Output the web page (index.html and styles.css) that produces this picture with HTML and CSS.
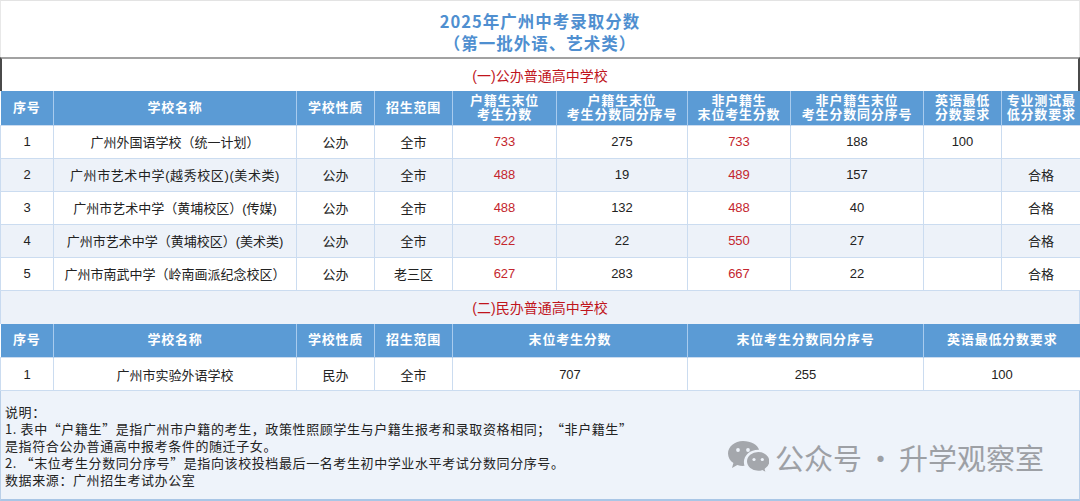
FILE: index.html
```html
<!DOCTYPE html>
<html lang="zh-CN">
<head>
<meta charset="utf-8">
<title>2025年广州中考录取分数</title>
<link rel="stylesheet" href="styles.css">
</head>
<body>
<div class="page">
  <header class="title">
    <div class="tline">2025年广州中考录取分数</div>
    <div class="tline">（第一批外语、艺术类）</div>
  </header>

  <div class="section-head first">(一)公办普通高中学校</div>
  <table class="grid">
    <colgroup>
      <col class="c-no"><col class="c-name"><col class="c-type"><col class="c-range">
      <col class="c-a"><col class="c-b"><col class="c-c"><col class="c-d"><col class="c-e"><col class="c-f">
    </colgroup>
    <thead>
      <tr class="hrow">
        <th>序号</th><th>学校名称</th><th>学校性质</th><th>招生范围</th>
        <th>户籍生末位<br>考生分数</th><th>户籍生末位<br>考生分数同分序号</th>
        <th>非户籍生<br>末位考生分数</th><th>非户籍生末位<br>考生分数同分序号</th>
        <th>英语最低<br>分数要求</th><th>专业测试最<br>低分数要求</th>
      </tr>
    </thead>
    <tbody>
      <tr><td>1</td><td>广州外国语学校（统一计划）</td><td>公办</td><td>全市</td><td class="red">733</td><td>275</td><td class="red">733</td><td>188</td><td>100</td><td></td></tr>
      <tr class="alt"><td>2</td><td class="loose">广州市艺术中学(越秀校区)(美术类)</td><td>公办</td><td>全市</td><td class="red">488</td><td>19</td><td class="red">489</td><td>157</td><td></td><td>合格</td></tr>
      <tr><td>3</td><td>广州市艺术中学（黄埔校区）(传媒)</td><td>公办</td><td>全市</td><td class="red">488</td><td>132</td><td class="red">488</td><td>40</td><td></td><td>合格</td></tr>
      <tr class="alt"><td>4</td><td>广州市艺术中学（黄埔校区）(美术类)</td><td>公办</td><td>全市</td><td class="red">522</td><td>22</td><td class="red">550</td><td>27</td><td></td><td>合格</td></tr>
      <tr><td>5</td><td>广州市南武中学（岭南画派纪念校区）</td><td>公办</td><td>老三区</td><td class="red">627</td><td>283</td><td class="red">667</td><td>22</td><td></td><td>合格</td></tr>
    </tbody>
  </table>

  <div class="section-head second">(二)民办普通高中学校</div>
  <table class="grid">
    <colgroup>
      <col class="c-no"><col class="c-name"><col class="c-type"><col class="c-range">
      <col class="c-g"><col class="c-h"><col class="c-i">
    </colgroup>
    <thead>
      <tr class="hrow">
        <th>序号</th><th>学校名称</th><th>学校性质</th><th>招生范围</th>
        <th>末位考生分数</th><th>末位考生分数同分序号</th><th>英语最低分数要求</th>
      </tr>
    </thead>
    <tbody>
      <tr><td>1</td><td>广州市实验外语学校</td><td>民办</td><td>全市</td><td>707</td><td>255</td><td>100</td></tr>
    </tbody>
  </table>

  <div class="notes">
    <p>说明：</p>
    <p>1. 表中<span class="lq">“</span>户籍生<span class="rq">”</span>是指广州市户籍的考生，政策性照顾学生与户籍生报考和录取资格相同；<span class="lq">“</span>非户籍生<span class="rq">”</span></p>
    <p>是指符合公办普通高中报考条件的随迁子女。</p>
    <p>2. <span class="lq">“</span>末位考生分数同分序号<span class="rq">”</span>是指向该校投档最后一名考生初中学业水平考试分数同分序号。</p>
    <p>数据来源：广州招生考试办公室</p>

    <div class="watermark">
      <svg class="wx" viewBox="0 0 42 34" width="42" height="34" aria-hidden="true">
        <path d="M16 1C7.7 1 1 6.6 1 13.5c0 3.9 2.1 7.3 5.4 9.6L5 28l5.3-3c1.8.6 3.7.9 5.7.9.5 0 1 0 1.5-.1-.4-1.2-.6-2.4-.6-3.7 0-6.9 6.4-12.4 14.3-12.4h.9C30.6 4.9 24 1 16 1z" fill="#a4a7ac"/>
        <circle cx="11" cy="10" r="1.9" fill="#eef3fa"/>
        <circle cx="21" cy="10" r="1.9" fill="#eef3fa"/>
        <path d="M31.2 11.2c-6.6 0-11.9 4.5-11.9 10.1s5.3 10.1 11.9 10.1c1.4 0 2.8-.2 4-.6l4.3 2.3-1.1-3.9c2.8-1.9 4.6-4.7 4.6-7.9 0-5.6-5.3-10.1-11.8-10.1z" fill="#a4a7ac" stroke="#eef3fa" stroke-width="1.4"/>
        <circle cx="27" cy="19.5" r="1.6" fill="#eef3fa"/>
        <circle cx="35.3" cy="19.5" r="1.6" fill="#eef3fa"/>
      </svg>
      <span>公众号</span><span class="dot">·</span><span>升学观察室</span>
    </div>
  </div>
</div>
</body>
</html>
```

FILE: styles.css
```css
* { box-sizing: border-box; }

html, body {
  margin: 0;
  padding: 0;
  background: #ffffff;
}

body {
  font-family: "Liberation Sans", "Noto Sans CJK SC", sans-serif;
  color: #222222;
}

.page {
  width: 1080px;
  height: 501px;
  display: flex;
  flex-direction: column;
  overflow: hidden;
}

.title {
  height: 57px;
  border-top: 1px solid #e3e3e3;
  border-left: 1px solid #e8e8e8;
  border-right: 1px solid #e8e8e8;
  padding-top: 9px;
  text-align: center;
  font-family: "Noto Sans CJK SC", sans-serif;
  font-size: 16.5px;
  font-weight: 700;
  letter-spacing: 1px;
  color: #4f8fd0;
}

.tline {
  height: 22px;
  line-height: 22px;
}

.section-head {
  display: flex;
  align-items: center;
  justify-content: center;
  font-family: "Liberation Sans", "Noto Sans CJK SC", sans-serif;
  font-size: 14px;
  color: #c0141c;
}

.section-head.first {
  height: 34px;
  border-top: 2px solid #a2a2a2;
  border-left: 2px solid #4a4a4a;
  border-right: 2px solid #4a4a4a;
  background: #ffffff;
}

.section-head.second {
  height: 33px;
  background: #edf2f9;
  border-left: 1px solid #c8daf0;
  border-right: 1px solid #c8daf0;
}

.grid {
  width: 1080px;
  border-collapse: collapse;
  table-layout: fixed;
}

.c-no { width: 53px; }
.c-name { width: 243px; }
.c-type { width: 78px; }
.c-range { width: 78px; }
.c-a { width: 104px; }
.c-b { width: 131px; }
.c-c { width: 103px; }
.c-d { width: 133px; }
.c-e { width: 78px; }
.c-f { width: 79px; }
.c-g { width: 235px; }
.c-h { width: 236px; }
.c-i { width: 157px; }

.grid th {
  height: 34px;
  padding: 0;
  background: #5b9bd5;
  color: #ffffff;
  font-size: 13px;
  font-weight: 700;
  line-height: 14px;
  letter-spacing: 0.8px;
  text-align: center;
  border-left: 1px solid #a8cbee;
  border-right: 1px solid #a8cbee;
}

.grid th:first-child { border-left: none; }
.grid th:last-child { border-right: none; }

.grid td {
  height: 33px;
  padding: 0;
  font-size: 13px;
  text-align: center;
  color: #222222;
  border: 1px solid #cbdcf0;
  background: #ffffff;
}

.grid td.loose { letter-spacing: 0.6px; }

.grid tr.alt td { background: #edf2f9; }

.grid td.red { color: #c4262e; }

.notes {
  position: relative;
  flex: 1;
  background: #eef3fa;
  border-left: 1px solid #b9cfe8;
  border-right: 1px solid #b9cfe8;
  border-bottom: 2px solid #a9c6e6;
  padding: 12px 0 0 4px;
  font-family: "Noto Sans CJK SC", sans-serif;
  font-size: 13px;
  letter-spacing: 0.6px;
  line-height: 17px;
  color: #222222;
}

.notes p { margin: 0; }

.lq, .rq {
  display: inline-block;
  width: 13.6px;
}
.lq { text-align: right; }
.rq { text-align: left; }

.watermark {
  position: absolute;
  left: 726px;
  top: 48px;
  display: flex;
  align-items: center;
  gap: 6px;
  color: #9da0a5;
  font-family: "Noto Sans CJK SC", sans-serif;
  font-size: 29px;
  line-height: 36px;
  letter-spacing: 0;
}

.watermark .dot {
  margin: 0 -2px;
}

.wx { display: block; }
```
